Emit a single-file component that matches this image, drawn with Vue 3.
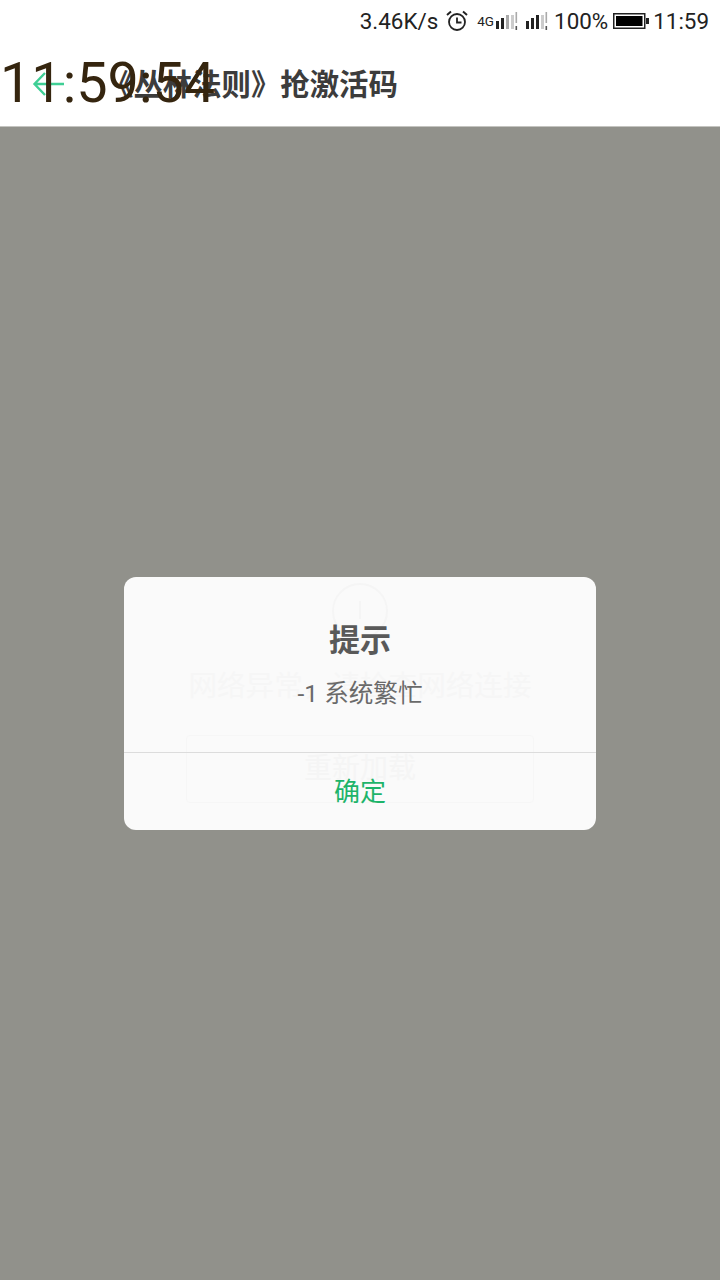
<template>
  <div class="page">
    <div class="status-bar">
      <span class="speed">3.46K/s</span>
      <svg class="alarm" width="22" height="22" viewBox="0 0 22 22" fill="none" stroke="#222" stroke-width="1.8">
        <circle cx="11" cy="12" r="8" />
        <path d="M11 7.5V12.5H15.5" />
        <path d="M1 5 5 1.6M21 5 17 1.6" stroke-width="2" />
      </svg>
      <span class="net">4G</span>
      <svg class="sim1" width="22" height="20" viewBox="0 0 22 20">
        <rect x="0" y="10" width="3" height="8" fill="#222" />
        <rect x="5" y="7" width="3" height="11" fill="#222" />
        <rect x="10" y="4" width="3" height="14" fill="#aaa" />
        <rect x="15" y="4" width="3" height="14" fill="#ccc" />
        <rect x="19.5" y="1" width="1.6" height="11" fill="#aaa" />
        <rect x="19.5" y="15" width="1.6" height="4" fill="#555" />
      </svg>
      <svg class="sim2" width="22" height="20" viewBox="0 0 22 20">
        <rect x="0" y="10" width="3" height="8" fill="#222" />
        <rect x="5" y="7" width="3" height="11" fill="#222" />
        <rect x="10" y="4" width="3" height="14" fill="#222" />
        <rect x="15" y="4" width="3" height="14" fill="#ccc" />
        <rect x="19.5" y="1" width="1.6" height="11" fill="#aaa" />
        <rect x="19.5" y="15" width="1.6" height="4" fill="#555" />
      </svg>
      <span class="level">100%</span>
      <svg class="battery" width="36" height="16" viewBox="0 0 36 16">
        <rect x="0.75" y="0.75" width="31" height="14.5" fill="none" stroke="#222" stroke-width="1.5" />
        <rect x="3" y="3" width="26.5" height="10" fill="#000" />
        <rect x="33" y="5" width="3" height="6" fill="#222" />
      </svg>
      <span class="clock">11:59</span>
    </div>

    <div class="nav-bar">
      <svg class="back" width="34" height="30" viewBox="0 0 34 30" fill="none" stroke="#3fcf95" stroke-width="2.4">
        <path d="M32 15H3M13 4 2.5 15 13 26" />
      </svg>
      <div class="title">《丛林法则》抢激活码</div>
    </div>

    <div class="content">
      <div class="dialog">
        <div class="ghost">
          <svg width="56" height="56" viewBox="0 0 56 56" fill="none" stroke="#f5f5f5" stroke-width="2">
            <circle cx="28" cy="28" r="27" />
            <path d="M28 18V36" />
          </svg>
          <div class="ghost-text">网络异常，请检查网络连接</div>
          <div class="ghost-btn">重新加载</div>
        </div>
        <div class="dialog-body">
          <div class="dialog-title">提示</div>
          <div class="dialog-msg">-1 系统繁忙</div>
        </div>
        <div class="dialog-ok">确定</div>
      </div>
    </div>

    <div class="stamp">11:59:54</div>
  </div>
</template>

<script setup>
</script>

<style>
body {
  margin: 0;
}
</style>

<style scoped>
.page {
  position: relative;
  width: 720px;
  height: 1280px;
  display: flex;
  flex-direction: column;
  background: #fff;
  overflow: hidden;
  font-family: Roboto, "Noto Sans CJK SC", sans-serif;
}

.status-bar {
  height: 42px;
  display: flex;
  align-items: center;
  justify-content: flex-end;
  padding-right: 11px;
  font-size: 22.4px;
  color: #222;
}

.alarm {
  margin-left: 8px;
}

.net {
  margin-left: 9px;
  font-size: 13.5px;
}

.sim1 {
  margin-left: 2px;
}

.sim2 {
  margin-left: 8px;
}

.level {
  margin-left: 6px;
}

.battery {
  margin-left: 5px;
}

.clock {
  margin-left: 4px;
}

.nav-bar {
  height: 84px;
  display: flex;
  align-items: center;
  padding-left: 32px;
  padding-bottom: 2px;
  box-sizing: border-box;
}

.back {
  flex: none;
  margin-top: 2px;
}

.title {
  margin-left: 38px;
  margin-bottom: 3px;
  font-size: 29.4px;
  font-weight: 700;
  color: #3c3c3c;
  white-space: nowrap;
}

.content {
  flex: 1;
  background: #91918b;
  border-top: 1px solid #c4c4c0;
  display: flex;
  justify-content: center;
  padding-top: 450px;
}

.dialog {
  position: relative;
  width: 472px;
  height: 253px;
  background: #fafafa;
  border-radius: 12px;
  display: flex;
  flex-direction: column;
  overflow: hidden;
}

/* the page behind shows faintly through the dialog */
.ghost {
  position: absolute;
  top: 6px;
  left: 0;
  right: 0;
  display: flex;
  flex-direction: column;
  align-items: center;
}

.ghost-text {
  margin-top: 29px;
  font-size: 28.6px;
  line-height: 36px;
  color: #f6f6f6;
}

.ghost-btn {
  margin-top: 31px;
  width: 348px;
  height: 68px;
  line-height: 66px;
  text-align: center;
  font-size: 28px;
  color: #f5f5f5;
  border: 1px solid #f6f6f6;
  border-radius: 4px;
  box-sizing: border-box;
}

.dialog-body {
  position: relative;
  height: 175px;
  border-bottom: 1px solid #dcdcdc;
  text-align: center;
}

.dialog-title {
  margin-top: 44px;
  font-size: 31px;
  line-height: 40px;
  font-weight: 700;
  color: #595959;
}

.dialog-msg {
  margin-top: 17px;
  font-size: 24.6px;
  line-height: 32px;
  color: #6a6a6a;
}

.dialog-ok {
  position: relative;
  flex: 1;
  display: flex;
  align-items: center;
  justify-content: center;
  padding-bottom: 5px;
  font-size: 26px;
  color: #1eb46a;
}

.stamp {
  position: absolute;
  left: 0;
  top: 50px;
  font-size: 55.8px;
  line-height: 66px;
  color: #35250f;
  white-space: nowrap;
}
</style>
